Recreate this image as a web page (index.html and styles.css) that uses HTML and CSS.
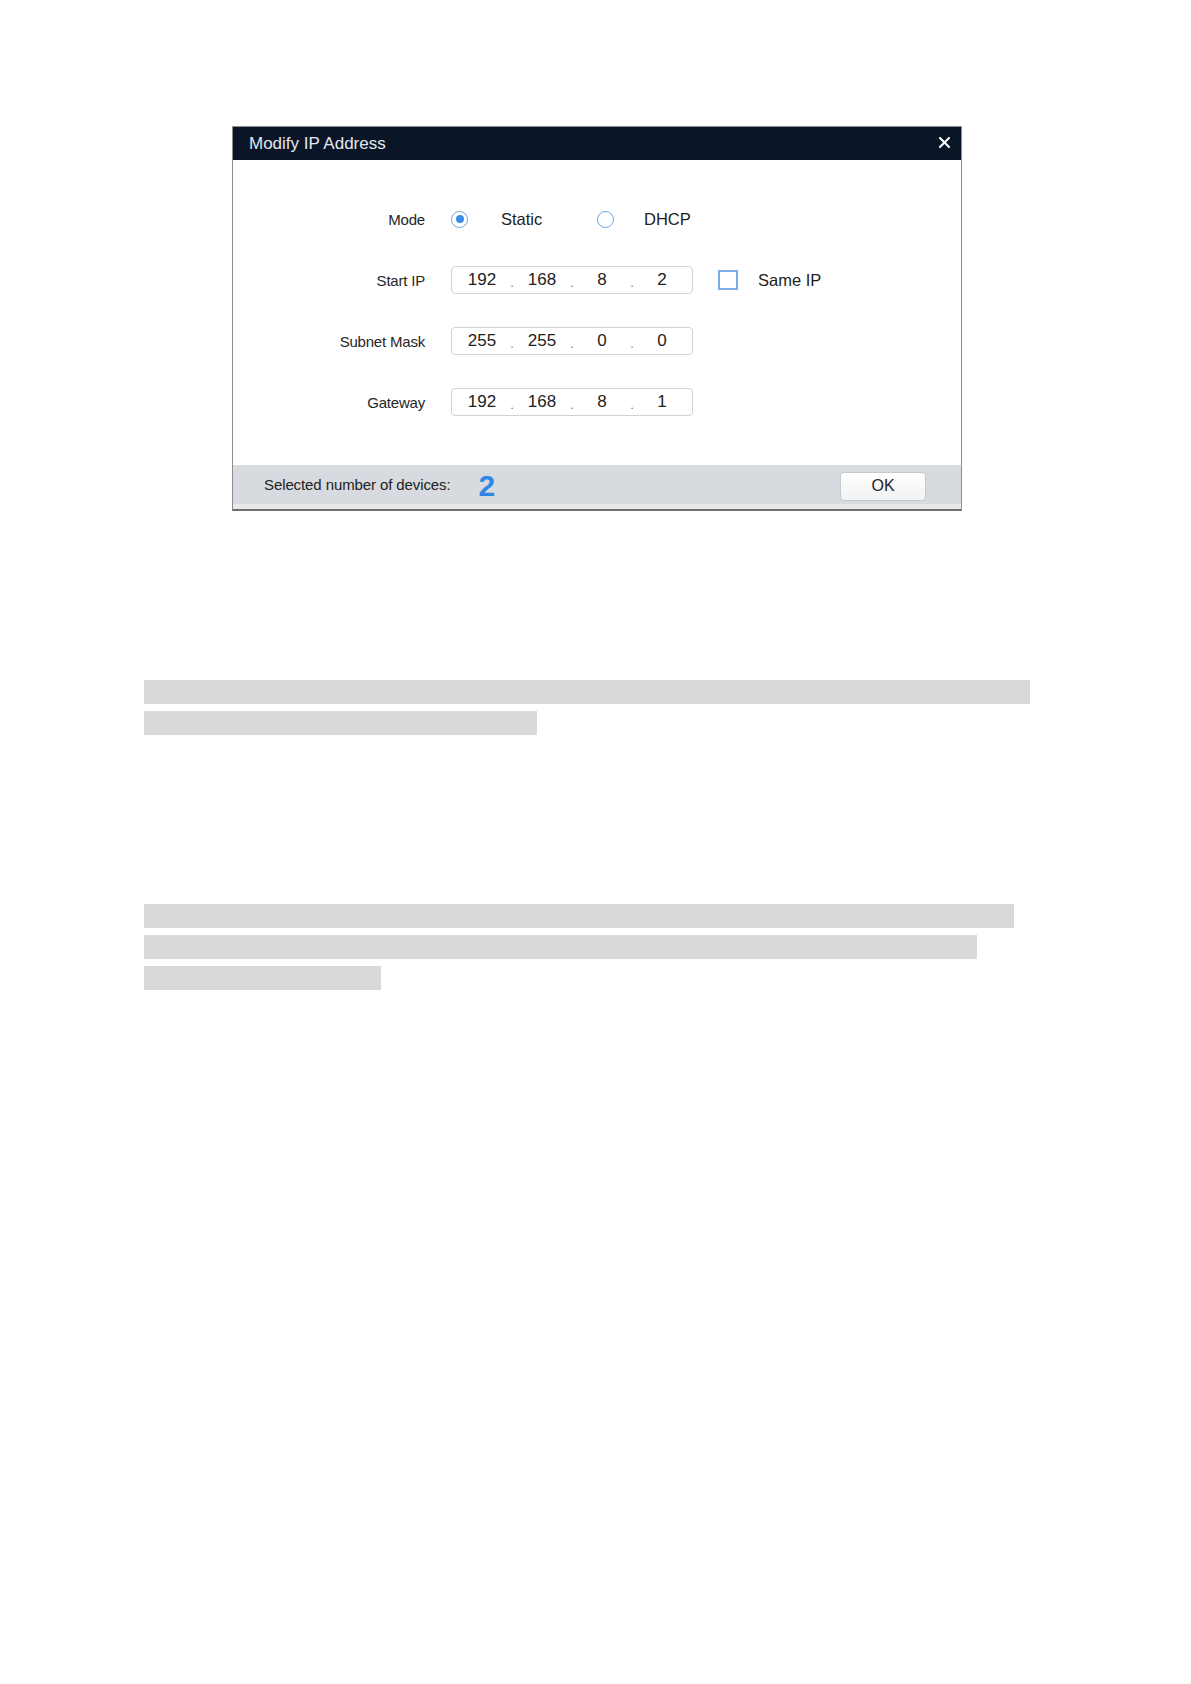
FILE: index.html
```html
<!DOCTYPE html>
<html>
<head>
<meta charset="utf-8">
<title>Modify IP Address</title>
<link rel="stylesheet" href="styles.css">
</head>
<body>
<div class="page">
  <div class="dialog">
    <div class="titlebar">
      <span class="title">Modify IP Address</span>
      <svg class="close" width="11" height="11" viewBox="0 0 11 11"><path d="M1 1L10 10M10 1L1 10" stroke="#ffffff" stroke-width="2" stroke-linecap="square"/></svg>
    </div>
    <div class="body">
      <div class="row">
        <div class="label">Mode</div>
        <div class="field">
          <div class="option">
            <span class="radio checked"></span><span class="opt-text">Static</span>
          </div>
          <div class="option">
            <span class="radio"></span><span class="opt-text opt-dhcp">DHCP</span>
          </div>
        </div>
      </div>
      <div class="row">
        <div class="label">Start IP</div>
        <div class="field">
          <div class="ip">
            <span class="seg">192</span><span class="dot"><i>.</i></span><span class="seg">168</span><span class="dot"><i>.</i></span><span class="seg">8</span><span class="dot"><i>.</i></span><span class="seg">2</span>
          </div>
          <span class="checkbox"></span><span class="check-text">Same IP</span>
        </div>
      </div>
      <div class="row">
        <div class="label">Subnet Mask</div>
        <div class="field">
          <div class="ip">
            <span class="seg">255</span><span class="dot"><i>.</i></span><span class="seg">255</span><span class="dot"><i>.</i></span><span class="seg">0</span><span class="dot"><i>.</i></span><span class="seg">0</span>
          </div>
        </div>
      </div>
      <div class="row">
        <div class="label">Gateway</div>
        <div class="field">
          <div class="ip">
            <span class="seg">192</span><span class="dot"><i>.</i></span><span class="seg">168</span><span class="dot"><i>.</i></span><span class="seg">8</span><span class="dot"><i>.</i></span><span class="seg">1</span>
          </div>
        </div>
      </div>
    </div>
    <div class="footer">
      <span class="count-label">Selected number of devices:</span>
      <span class="count">2</span>
      <button class="ok">OK</button>
    </div>
  </div>

  <div class="text-block first">
    <div class="bar" style="width:886px"></div>
    <div class="bar" style="width:393px"></div>
  </div>
  <div class="text-block second">
    <div class="bar" style="width:870px"></div>
    <div class="bar" style="width:833px"></div>
    <div class="bar" style="width:237px"></div>
  </div>
</div>
</body>
</html>
```

FILE: styles.css
```css
* { box-sizing: border-box; }
html, body { margin: 0; padding: 0; background: #ffffff; }
body { font-family: "Liberation Sans", Arial, sans-serif; color: #222; }

.page { padding-top: 126px; }

.dialog {
  margin-left: 232px;
  width: 730px;
  border: 1px solid #8e8e8e;
  border-bottom: 2px solid #6e6e6e;
  background: #ffffff;
}

.titlebar {
  height: 33px;
  background: #0a1627;
  display: flex;
  align-items: center;
  padding-left: 16px;
  padding-right: 11px;
}
.title {
  color: #e4e8ee;
  font-size: 17px;
  flex: 1;
}
.close { display: block; margin-top: -3px; }

.body {
  padding: 45px 0 49px 0;
  display: flex;
  flex-direction: column;
  gap: 33px;
}
.row {
  display: flex;
  align-items: center;
  height: 28px;
}
.label {
  width: 192px;
  text-align: right;
  font-size: 15px;
  color: #262626;
  letter-spacing: -0.2px;
}
.field {
  margin-left: 26px;
  display: flex;
  align-items: center;
}

.option {
  width: 146px;
  display: flex;
  align-items: center;
}
.radio {
  width: 17px;
  height: 17px;
  border: 1.5px solid #6aa6e4;
  border-radius: 50%;
  display: flex;
  align-items: center;
  justify-content: center;
}
.radio.checked::after {
  content: "";
  width: 8px;
  height: 8px;
  border-radius: 50%;
  background: #3b8de8;
}
.opt-text {
  margin-left: 33px;
  font-size: 16.5px;
  color: #222;
}
.opt-text.opt-dhcp { margin-left: 30px; }

.ip {
  width: 242px;
  height: 28px;
  border: 1px solid #d2d2d2;
  border-radius: 4px;
  display: grid;
  grid-template-columns: 1fr 0 1fr 0 1fr 0 1fr;
  align-items: center;
  background: #fff;
}
.seg {
  text-align: center;
  font-size: 17px;
  color: #222;
  line-height: 26px;
}
.dot {
  width: 0;
  display: flex;
  justify-content: center;
  overflow: visible;
  line-height: 26px;
}
.dot i {
  font-style: normal;
  font-size: 13px;
  color: #7a7a7a;
  position: relative;
  top: 3px;
}

.checkbox {
  margin-left: 25px;
  width: 20px;
  height: 20px;
  border: 2px solid #79ade3;
  background: #fff;
}
.check-text {
  margin-left: 20px;
  font-size: 16.5px;
  color: #222;
}

.footer {
  height: 44px;
  background: #d7dade;
  border-bottom: 5px solid #e7e8ea;
  display: flex;
  align-items: center;
  padding-left: 31px;
  padding-right: 35px;
}
.count-label {
  font-size: 15px;
  color: #222;
  letter-spacing: -0.1px;
}
.count {
  margin-left: 28px;
  font-size: 30px;
  font-weight: bold;
  color: #2e87e4;
  line-height: 30px;
  margin-top: 2px;
}
.ok {
  margin-left: auto;
  margin-top: 3px;
  width: 86px;
  height: 29px;
  border: 1px solid #c6c8cc;
  border-radius: 4px;
  background: linear-gradient(#ffffff, #f1f2f4);
  font-family: "Liberation Sans", Arial, sans-serif;
  font-size: 16px;
  color: #222;
  padding: 0;
}

.text-block {
  padding-left: 144px;
  display: flex;
  flex-direction: column;
}
.text-block.first { margin-top: 169px; gap: 7px; }
.text-block.second { margin-top: 169px; gap: 7px; }
.bar {
  height: 24px;
  background: #d9d9d9;
}
```
